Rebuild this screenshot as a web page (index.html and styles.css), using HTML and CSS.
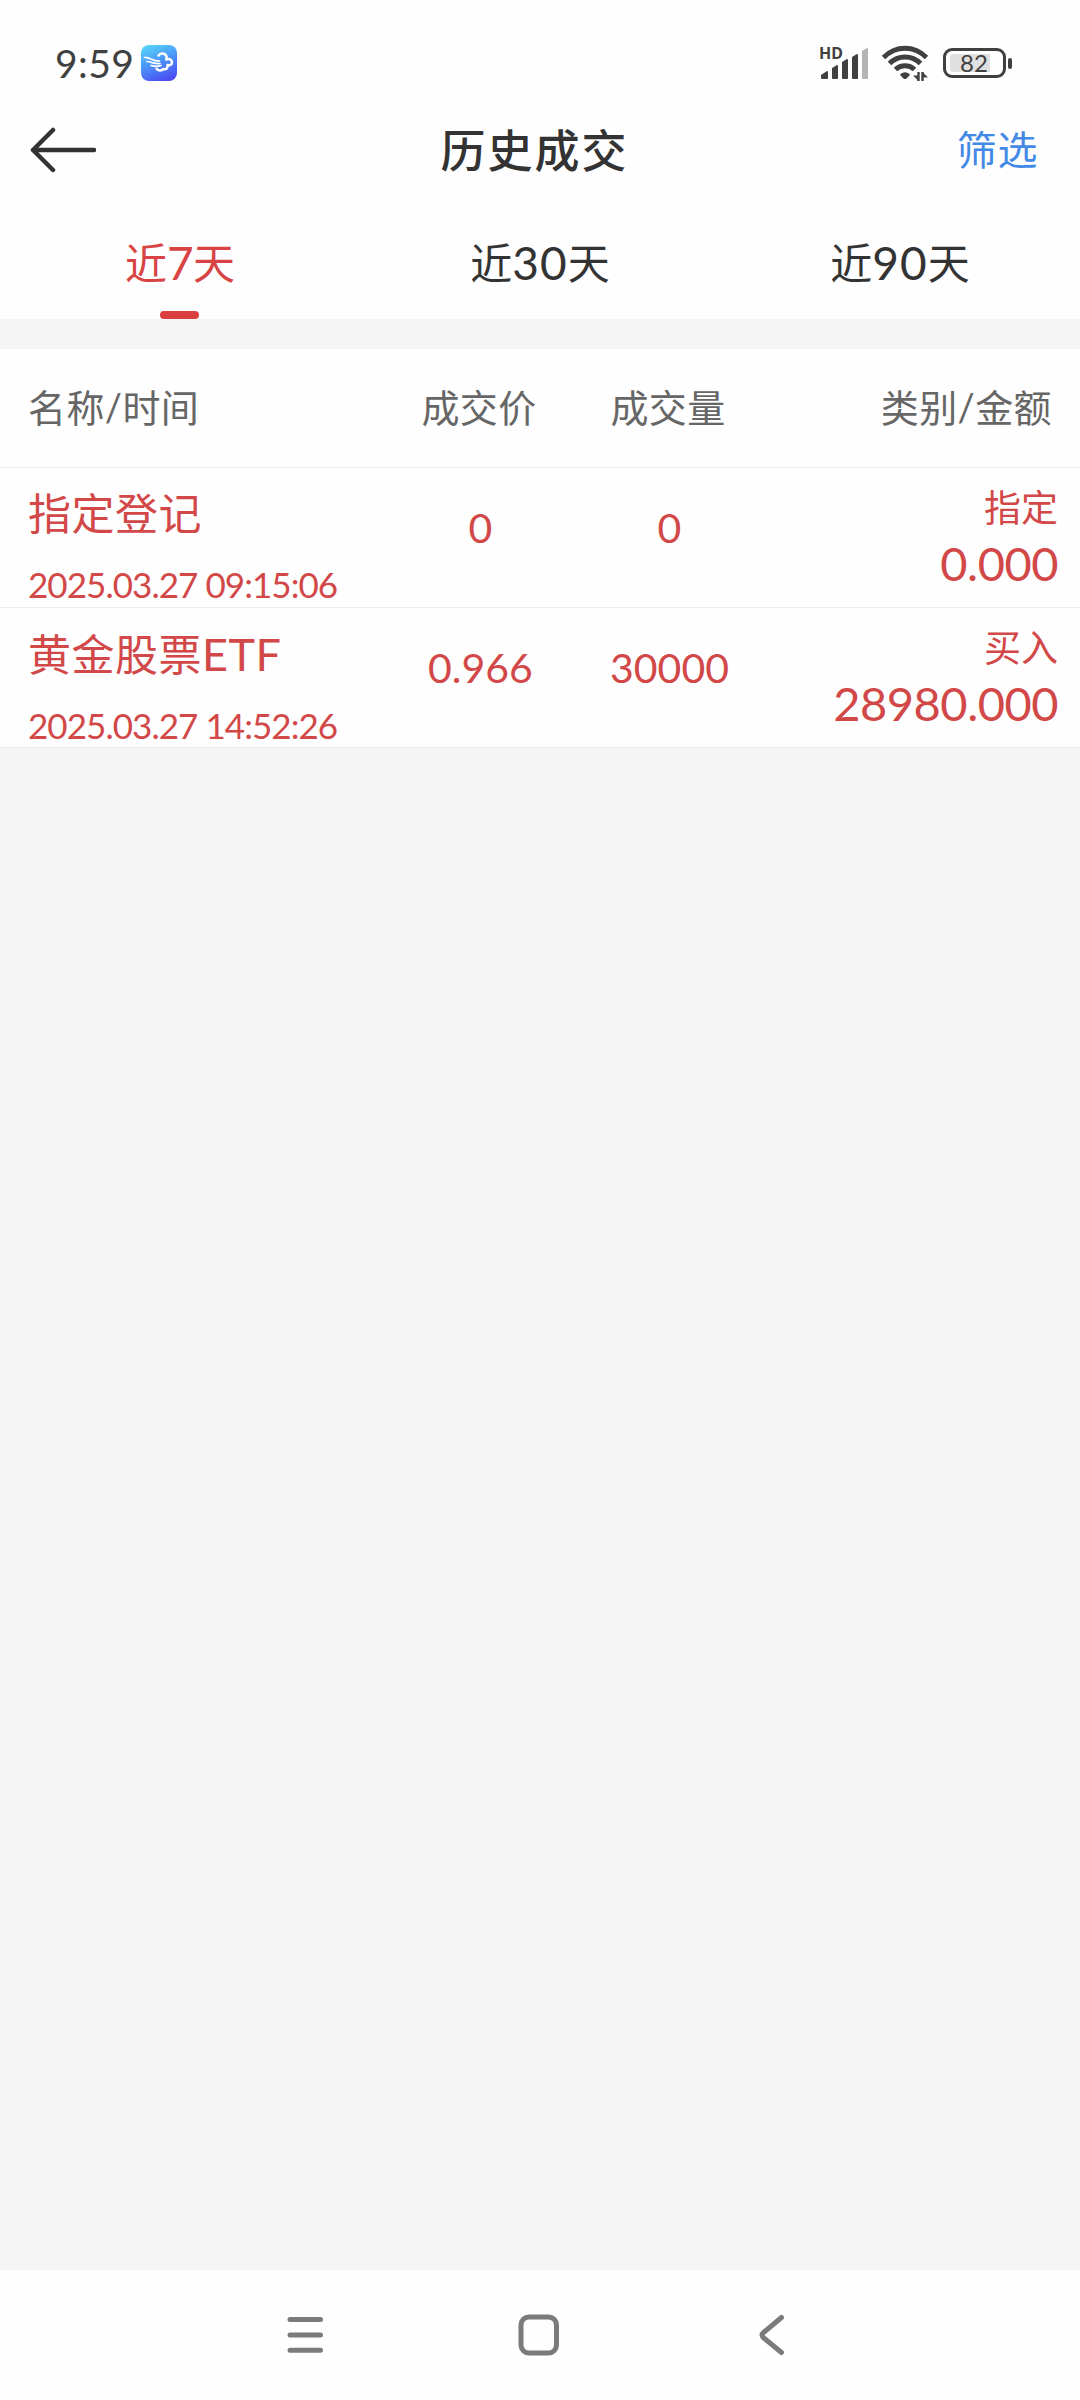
FILE: index.html
```html
<!DOCTYPE html>
<html lang="zh-CN">
<head>
    <meta charset="UTF-8">
    <meta name="viewport" content="width=device-width, initial-scale=1.0">
    <title>历史成交</title>
    <link rel="stylesheet" href="styles.css">
</head>
<body>
    <div class="screen">
        <div class="status-bar">
            <span class="clock">9:59</span>
            <svg class="app-icon" width="36" height="36" viewBox="0 0 36 36">
                <defs>
                    <linearGradient id="sky" x1="0.2" y1="0" x2="0.6" y2="1">
                        <stop offset="0" stop-color="#56d4fa"/>
                        <stop offset="0.5" stop-color="#4b93f8"/>
                        <stop offset="1" stop-color="#4a4ff2"/>
                    </linearGradient>
                </defs>
                <rect width="36" height="36" rx="8" fill="url(#sky)"/>
                <path d="M17.500 10.500c2-3 7-2.500 8 1c.3 1 .2 2-.3 3c3.500-1.200 6 .5 5.800 3c-.2 2.500-2.500 3.300-4.500 2.500c.8 3-1.500 5-4 4c-2 2-5.500 1.800-7-.2" fill="none" stroke="#fff" stroke-width="2.500" stroke-linecap="round" stroke-linejoin="round"/>
                <g fill="none" stroke="#fff" stroke-width="1.700" stroke-linecap="round">
                    <path d="M3.500 12.500c6-.5 8 4 15 3.500"/>
                    <path d="M6 16.500c4.500 0 7.500 3 13 2"/>
                    <path d="M10 20.500c3.500 1 6.500 1.500 10 0"/>
                </g>
            </svg>
            <svg class="signal" width="52" height="36" viewBox="0 0 52 36">
                <text class="hd" x="1" y="14">HD</text>
                <g fill="#404040">
                    <path d="M3 30l6-4q1 0 1 1v6q0 1-1 1h-5q-1 0-1-1z"/>
                    <path d="M14 23l5-3q1 0 1 1v12q0 1-1 1h-4q-1 0-1-1z"/>
                    <path d="M24 17l5-3q1 0 1 1v18q0 1-1 1h-4q-1 0-1-1z"/>
                    <path d="M34 12l5-3q1 0 1 1v23q0 1-1 1h-4q-1 0-1-1z"/>
                </g>
                <path d="M44 6l5-3q1 0 1 1v29q0 1-1 1h-4q-1 0-1-1z" fill="#b4b4b4"/>
            </svg>
            <svg class="wifi" width="48" height="38" viewBox="0 0 48 38">
                <g fill="none" stroke="#404040" stroke-width="5">
                    <path d="M2.500 13.500Q12 4.300 24 4.300T45.500 13.500"/>
                    <path d="M8.500 19.500Q15 13 24 13T39.500 19.500"/>
                    <path d="M14.500 25.500Q18.500 21.700 24 21.700T33.500 25.500"/>
                </g>
                <path d="M19.500 30q4.500-3.500 9 0q.8.600 0 1.500l-3 3q-1.500 1-3 0l-3-3q-.8-.9 0-1.500z" fill="#404040"/>
                <path d="M37.500 28v9M41.500 28v9" stroke="#404040" stroke-width="2.400"/>
                <path d="M32 31.500h5.500v5.500zM47 33.500h-5.500v-5.500z" fill="#404040"/>
            </svg>
            <div class="battery">
                <div class="battery-body"><span class="battery-level">82</span></div>
                <div class="battery-cap"></div>
            </div>
        </div>

        <div class="header">
            <svg class="back" width="68" height="48" viewBox="0 0 68 48">
                <path d="M25 4L5 24L25 44M5 24H66" fill="none" stroke="#333" stroke-width="4.500" stroke-linecap="round" stroke-linejoin="round"/>
            </svg>
            <div class="title">历史成交</div>
            <div class="filter">筛选</div>
        </div>

        <div class="tabs">
            <div class="tab active">近<span class="num">7</span>天</div>
            <div class="tab">近<span class="num">30</span>天</div>
            <div class="tab">近<span class="num">90</span>天</div>
        </div>

        <div class="list">
            <div class="row list-head">
                <div>名称/时间</div>
                <div class="center">成交价</div>
                <div class="center">成交量</div>
                <div class="right">类别/金额</div>
            </div>
            <div class="row record">
                <div>
                    <div class="name">指定登记</div>
                    <div class="time">2025.03.27 09:15:06</div>
                </div>
                <div class="value center">0</div>
                <div class="value center">0</div>
                <div class="right">
                    <div class="type">指定</div>
                    <div class="amount">0.000</div>
                </div>
            </div>
            <div class="row record">
                <div>
                    <div class="name">黄金股票<span class="latin">ETF</span></div>
                    <div class="time">2025.03.27 14:52:26</div>
                </div>
                <div class="value center">0.966</div>
                <div class="value center">30000</div>
                <div class="right">
                    <div class="type">买入</div>
                    <div class="amount">28980.000</div>
                </div>
            </div>
        </div>

        <div class="nav-bar">
            <svg width="44" height="44" viewBox="0 0 44 44">
                <path d="M6 6.500H36.500M6 22H36.500M6 37.300H36.500" fill="none" stroke="#7b7b7b" stroke-width="5" stroke-linecap="round"/>
            </svg>
            <svg width="44" height="44" viewBox="0 0 44 44">
                <rect x="4" y="4" width="35.500" height="36" rx="8" fill="none" stroke="#7b7b7b" stroke-width="5"/>
            </svg>
            <svg width="44" height="44" viewBox="0 0 44 44">
                <path d="M31.500 4.500L13.500 19.500Q10.500 22 13.500 24.800L31.500 39.500" fill="none" stroke="#7b7b7b" stroke-width="5" stroke-linecap="round" stroke-linejoin="round"/>
            </svg>
        </div>
    </div>
</body>
</html>
```

FILE: styles.css
```css
body {
    margin: 0;
    background-color: #f5f5f5;
    font-family: Lato, "Noto Sans CJK SC", sans-serif;
    color: #333;
}

.screen {
    display: flex;
    flex-direction: column;
    width: 1080px;
    height: 2400px;
    white-space: nowrap;
}

.status-bar {
    display: flex;
    align-items: center;
    box-sizing: border-box;
    height: 84px;
    padding: 42px 68px 0 55px;
    background-color: #fefefe;
}

.clock {
    width: 86px;
    font-size: 39px;
    line-height: 42px;
    letter-spacing: 0.4px;
    color: #404040;
}

.signal {
    margin-left: auto;
    overflow: visible;
}

.hd {
    font-family: "Noto Sans", sans-serif;
    font-size: 16px;
    font-weight: 700;
    fill: #404040;
}

.wifi {
    margin-left: 11px;
}

.battery {
    display: flex;
    align-items: center;
    gap: 2px;
    margin-left: 14px;
}

.battery-body {
    box-sizing: border-box;
    width: 63px;
    height: 30px;
    padding: 3px 4px;
    border: 3px solid #404040;
    border-radius: 9px;
}

.battery-level {
    display: block;
    width: 40px;
    height: 18px;
    border-radius: 3px 0 0 3px;
    background-color: #e0e0e0;
    font-size: 24px;
    line-height: 18px;
    text-indent: 10px;
    color: #404040;
}

.battery-cap {
    width: 4px;
    height: 11px;
    border-radius: 2px;
    background-color: #404040;
}

.header {
    display: grid;
    grid-template-columns: 200px 1fr 200px;
    align-items: center;
    height: 132px;
    background-color: #fefefe;
}

.back {
    margin-left: 28px;
}

.title {
    padding: 0 11px 3px 0;
    font-size: 45px;
    font-weight: 500;
    letter-spacing: 2px;
    text-align: center;
}

.filter {
    padding: 0 42px 4px 0;
    font-size: 40px;
    letter-spacing: 0.6px;
    text-align: right;
    color: #4389e6;
}

.tabs {
    display: grid;
    grid-template-columns: repeat(3, 1fr);
    height: 103px;
    background-color: #fefefe;
}

.tab {
    display: flex;
    justify-content: center;
    font-size: 42px;
    line-height: 94px;
}

.num {
    font-size: 46px;
    letter-spacing: 1px;
}

.tab.active {
    position: relative;
    color: #d84444;
}

.tab.active .num {
    letter-spacing: -0.5px;
}

.tab.active::after {
    content: "";
    position: absolute;
    bottom: 0;
    left: 160px;
    width: 39px;
    height: 8px;
    border-radius: 4px;
    background-color: #dc3f3f;
}

.list {
    margin-top: 30px;
    background-color: #fefefe;
}

.row {
    display: grid;
    grid-template-columns: 357px 188px 190px 1fr;
    box-sizing: border-box;
    padding: 0 22px 0 28px;
    border-bottom: 1px solid #ebebeb;
}

.list-head {
    height: 119px;
    padding-right: 28px;
    font-size: 38px;
    letter-spacing: 0.4px;
    line-height: 116px;
    color: #666;
}

.record {
    height: 140px;
    color: #d24848;
}

.center {
    text-align: center;
}

.right {
    text-align: right;
}

.name {
    padding-top: 16px;
    font-size: 43px;
    line-height: 60px;
    letter-spacing: 0.5px;
}

.latin {
    font-size: 45px;
}

.time {
    font-size: 35px;
    line-height: 44px;
    padding-top: 18px;
    letter-spacing: -0.95px;
}

.value {
    padding: 30px 0 0 3px;
    font-size: 41px;
    line-height: 60px;
}

.type {
    padding-top: 13px;
    font-size: 37px;
    line-height: 54px;
}

.amount {
    font-size: 47px;
    line-height: 56px;
    letter-spacing: -0.5px;
}

.nav-bar {
    display: flex;
    justify-content: center;
    align-items: center;
    gap: 189px;
    height: 130px;
    padding-right: 2px;
    margin-top: auto;
    background-color: #fefefe;
}
```
